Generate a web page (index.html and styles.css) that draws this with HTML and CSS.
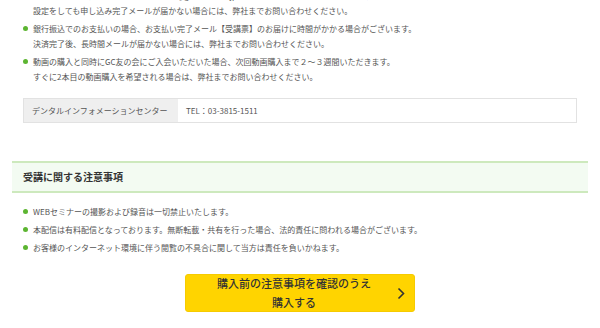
FILE: index.html
```html
<!DOCTYPE html>
<html lang="ja">
<head>
    <meta charset="UTF-8">
    <meta name="viewport" content="width=device-width, initial-scale=1.0">
    <title>受講に関する注意事項</title>
    <link rel="stylesheet" href="styles.css">
</head>
<body>
    <div class="wrap">
        <ul class="notes">
            <li>メールの受信設定をされている場合は、@gcdental.co.jp からのメールを受信できるように設定してください。<br>設定をしても申し込み完了メールが届かない場合には、弊社までお問い合わせください。</li>
            <li>銀行振込でのお支払いの場合、お支払い完了メール【受講票】のお届けに時間がかかる場合がございます。<br>決済完了後、長時間メールが届かない場合には、弊社までお問い合わせください。</li>
            <li>動画の購入と同時にGC友の会にご入会いただいた場合、次回動画購入まで２～３週間いただきます。<br>すぐに2本目の動画購入を希望される場合は、弊社までお問い合わせください。</li>
        </ul>

        <div class="contact">
            <div class="contact-name">デンタルインフォメーションセンター</div>
            <div class="contact-tel">TEL：03-3815-1511</div>
        </div>

        <h2 class="section-title">受講に関する注意事項</h2>

        <ul class="notes notes-bottom">
            <li>WEBセミナーの撮影および録音は一切禁止いたします。</li>
            <li>本配信は有料配信となっております。無断転載・共有を行った場合、法的責任に問われる場合がございます。</li>
            <li>お客様のインターネット環境に伴う閲覧の不具合に関して当方は責任を負いかねます。</li>
        </ul>

        <a href="#" class="buy-btn">
            <span class="buy-text">購入前の注意事項を確認のうえ<br>購入する</span>
            <svg class="buy-arrow" width="8" height="13" viewBox="0 0 8 13">
                <path d="M1.5 1.5 L6.5 6.5 L1.5 11.5" fill="none" stroke="#333" stroke-width="1.6"/>
            </svg>
        </a>
    </div>
</body>
</html>
```

FILE: styles.css
```css
body, html {
    margin: 0;
    padding: 0;
    background-color: #fff;
    font-family: "Noto Sans CJK JP", "Noto Sans", sans-serif;
    font-size: 8px;
    color: #555;
}
.wrap {
    margin-top: -12px;
    padding: 0 12px;
}
.notes {
    list-style: none;
    margin: 0;
    padding: 0 11px;
    display: flex;
    flex-direction: column;
    gap: 3px;
}
.notes li {
    display: flex;
    line-height: 15px;
    white-space: nowrap;
}
.notes li::before {
    content: "";
    flex: none;
    width: 5px;
    height: 5px;
    margin: 5px 5px 0 0;
    border-radius: 50%;
    background-color: #5cb531;
}
.contact {
    display: flex;
    margin: 14px 11px 0;
    border: 1px solid #e2e2e2;
    height: 23px;
    line-height: 23px;
}
.contact-name {
    width: 146px;
    padding-left: 8px;
    background-color: #efefef;
}
.contact-tel {
    padding-left: 8px;
}
.section-title {
    margin: 38px 0 0;
    height: 28px;
    line-height: 28px;
    padding-left: 11px;
    font-size: 10px;
    font-weight: bold;
    color: #333;
    background-color: #f3fbf2;
    border-top: 2px solid #cde9bd;
    border-bottom: 2px solid #cde9bd;
}
.notes-bottom {
    margin-top: 11px;
}
.buy-btn {
    display: flex;
    align-items: center;
    gap: 10px;
    width: 230px;
    height: 38px;
    box-sizing: border-box;
    margin: 19px auto 0;
    padding: 0 9px 0 15px;
    background-color: #ffd400;
    border: 1px solid #f6cb00;
    border-radius: 3px;
    text-decoration: none;
    color: #333;
}
.buy-text {
    flex: 1;
    text-align: center;
    font-size: 11px;
    line-height: 19px;
    font-weight: 500;
}
.buy-arrow {
    flex: none;
}
```
